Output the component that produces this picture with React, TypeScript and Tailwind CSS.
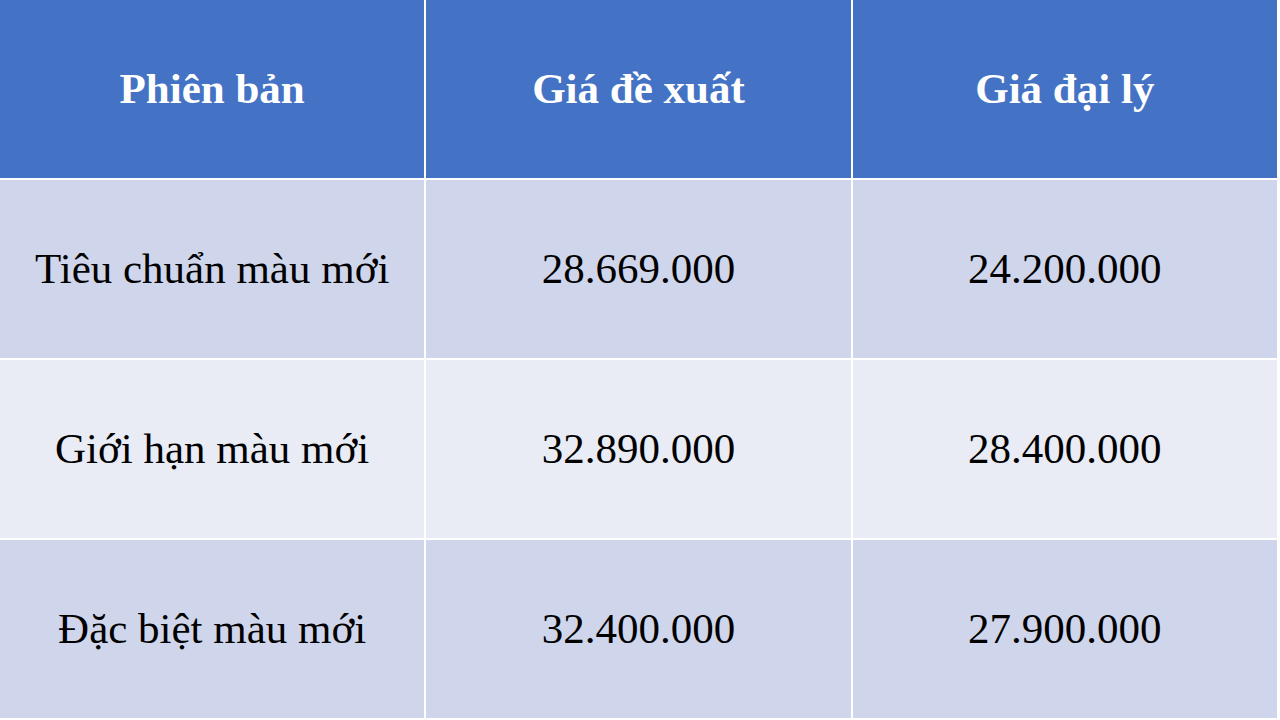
const header = ['Phiên bản', 'Giá đề xuất', 'Giá đại lý'];

const rows = [
  ['Tiêu chuẩn màu mới', '28.669.000', '24.200.000'],
  ['Giới hạn màu mới', '32.890.000', '28.400.000'],
  ['Đặc biệt màu mới', '32.400.000', '27.900.000'],
];

export default function App() {
  return (
    <div className="w-[1280px] h-[720px] bg-white grid grid-cols-3 grid-rows-4 gap-[2px] pb-[2px] pr-[3px] font-['Liberation_Serif','Tinos','DejaVu_Serif',serif]">
      {header.map((h) => (
        <div
          key={h}
          className="bg-[#4472c4] flex items-center justify-center text-white font-bold text-[43px]"
        >
          {h}
        </div>
      ))}
      {rows.map((r, i) =>
        r.map((c, j) => (
          <div
            key={`${i}-${j}`}
            className={`${i % 2 === 0 ? 'bg-[#cfd5ea]' : 'bg-[#e9ebf5]'} flex items-center justify-center text-black text-[43px]`}
          >
            {c}
          </div>
        ))
      )}
    </div>
  );
}
